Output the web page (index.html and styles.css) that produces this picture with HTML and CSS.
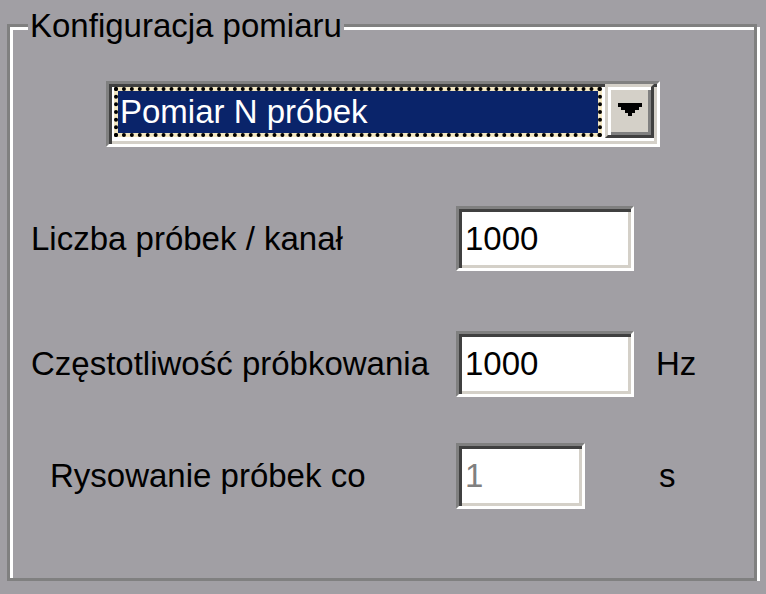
FILE: index.html
```html
<!DOCTYPE html>
<html>
<head>
<meta charset="utf-8">
<link rel="stylesheet" href="styles.css">
</head>
<body>
<div class="group">
	<span class="legend">Konfiguracja pomiaru</span>

	<div class="combo">
		<div class="combo-item">Pomiar N próbek</div>
		<div class="combo-btn">
			<svg width="24" height="13" viewBox="0 0 24 13"><polygon points="0,0 24,0 24,4 21,4 21,7 17,7 17,10 14,10 14,13 10,13 10,10 7,10 7,7 3,7 3,4 0,4" fill="#000"/></svg>
		</div>
	</div>

	<div class="row first">
		<label class="lbl" for="n_samples">Liczba próbek / kanał</label>
		<div class="slot"><input class="field wide" id="n_samples" type="text" value="1000"></div>
	</div>

	<div class="row second">
		<label class="lbl" for="freq">Częstotliwość próbkowania</label>
		<div class="slot"><input class="field wide" id="freq" type="text" value="1000"></div>
		<span class="unit">Hz</span>
	</div>

	<div class="row third">
		<label class="lbl indent" for="draw_every">Rysowanie próbek co</label>
		<div class="slot"><input class="field short" id="draw_every" type="text" value="1" disabled></div>
		<span class="unit unit-s">s</span>
	</div>
</div>
</body>
</html>
```

FILE: styles.css
```css
body {
  margin: 0;
  background-color: #a19fa4;
  color: #000;
  font-family: "Liberation Sans", Arial, sans-serif;
  font-size: 33px;
}

/* etched group box */
.group {
  position: relative;
  box-sizing: border-box;
  width: 750px;
  height: 557px;
  margin: 24px 0 0 7px;
  padding: 54px 0 0 21px;
  border: 3px solid #808080;
  box-shadow: inset 3px 3px 0 #fff, 3px 3px 0 #fff;
}

.legend {
  position: absolute;
  top: -20px;
  left: 18px;
  padding: 0 2px;
  background-color: #a19fa4;
}

/* combo box */
.combo {
  box-sizing: border-box;
  display: flex;
  width: 554px;
  height: 66px;
  margin-left: 75px;
  padding: 2px 0 0 2px;
  background-color: #fff;
  border: 3px solid;
  border-color: #808080 #fff #fff #808080;
  box-shadow: inset 3px 3px 0 #404040, inset -3px -3px 0 #d4d0c8;
}

.combo-item {
  box-sizing: border-box;
  width: 488px;
  height: 50px;
  margin-left: 3px;
  margin-top: 1px;
  padding-left: 2px;
  color: #fff;
  line-height: 42px;
  border: 4px dotted #000;
  background: linear-gradient(#0a246a, #0a246a) padding-box, #f3e7c2;
}

.combo-btn {
  box-sizing: border-box;
  display: flex;
  align-items: center;
  justify-content: center;
  width: 49px;
  height: 54px;
  margin-left: 3px;
  margin-top: -2px;
  padding-bottom: 4px;
  background-color: #d4d0c8;
  border: 3px solid;
  border-color: #d4d0c8 #404040 #404040 #d4d0c8;
  box-shadow: inset 3px 3px 0 #fff, inset -3px -3px 0 #808080;
}

/* label rows */
.row {
  display: flex;
  align-items: baseline;
}

.first { margin-top: 59px; }
.second { margin-top: 60px; }
.third { margin-top: 46px; }

.lbl {
  width: 425px;
}

.indent {
  box-sizing: border-box;
  padding-left: 19px;
}

.slot {
  width: 200px;
}

.field {
  box-sizing: border-box;
  height: 65px;
  padding: 0 2px 0 6px;
  margin: 0;
  font-family: "Liberation Sans", Arial, sans-serif;
  font-size: 33px;
  color: #000;
  background-color: #fff;
  border: 3px solid;
  border-color: #808080 #fff #fff #808080;
  box-shadow: inset 3px 3px 0 #404040, inset -3px -3px 0 #d4d0c8;
  outline: none;
}

.wide { width: 178px; }
.second .field { height: 66px; }

.short {
  width: 129px;
  height: 66px;
}

.field:disabled {
  color: #808080;
  -webkit-text-fill-color: #808080;
  opacity: 1;
}

.unit-s {
  margin-left: 3px;
}
```
